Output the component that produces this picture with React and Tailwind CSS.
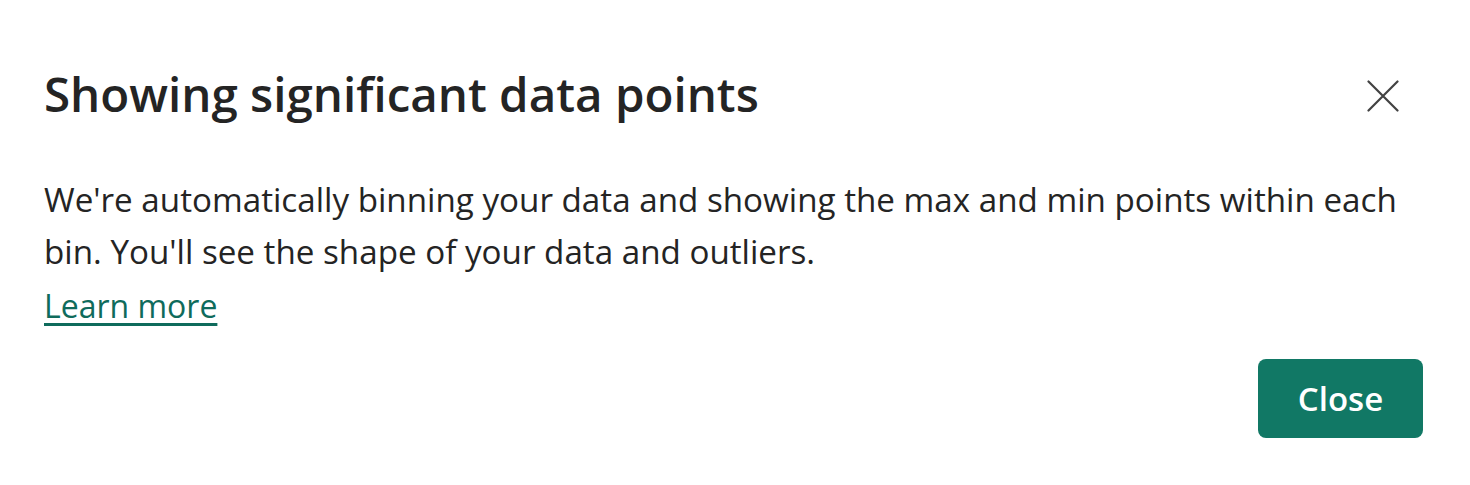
export default function App() {
  return (
    <div className="w-[1470px] h-[485px] bg-white" style={{ fontFamily: '"Open Sans", "Noto Sans", sans-serif' }}>
      <div className="pl-[44px] pr-[47px] pt-[58px] flex flex-col">
        <div className="flex items-start justify-between">
          <h1 className="text-[47.5px] leading-[72px] font-semibold text-[#242424]">Showing significant data points</h1>
          <button className="w-[44px] h-[44px] mt-[16px] mr-[18px] flex items-center justify-center text-[#424242]">
            <svg width="32" height="32" viewBox="0 0 32 32" fill="none">
              <path d="M1.5 1.5 L30.5 30.5 M30.5 1.5 L1.5 30.5" stroke="currentColor" strokeWidth="2.2" strokeLinecap="round" />
            </svg>
          </button>
        </div>
        <p className="mt-[44px] text-[33.2px] leading-[52px] text-[#242424]">
          We're automatically binning your data and showing the max and min points within each bin. You'll see the shape of your data and outliers.
        </p>
        <a href="#" className="mt-[2px] text-[32px] leading-[52px] text-[#0f6b5c] underline underline-offset-[5px] decoration-[3px] w-fit">Learn more</a>
        <div className="flex justify-end mt-[27px]">
          <button className="w-[165px] h-[79px] rounded-[8px] bg-[#117865] text-white text-[33px] font-semibold">Close</button>
        </div>
      </div>
    </div>
  );
}
